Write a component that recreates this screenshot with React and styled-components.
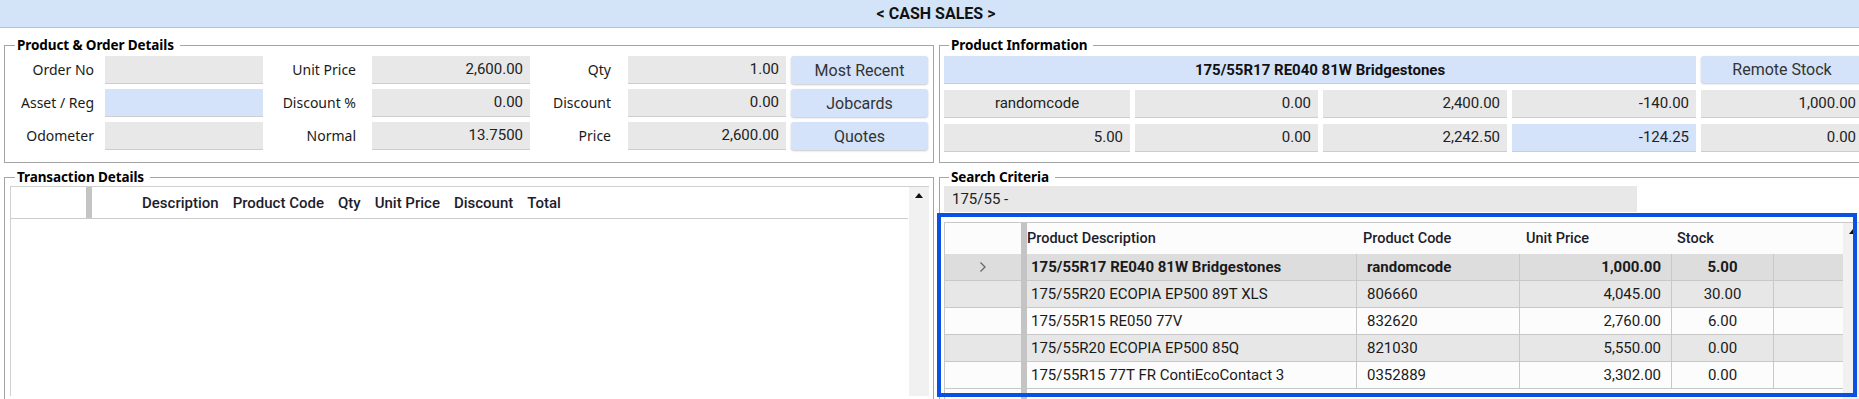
import React from 'react';
import styled, { createGlobalStyle } from 'styled-components';

const GlobalStyle = createGlobalStyle`
  html, body {
    margin: 0;
    padding: 0;
    overflow: hidden;
    background: #ffffff;
  }
  body {
    font-family: Roboto, "Liberation Sans", sans-serif;
    color: #1f1f1f;
  }
`;

const Page = styled.div`
  width: 1872px;
  height: 399px;
  overflow: hidden;
`;

const TopBar = styled.div`
  height: 27px;
  background: #d3e3f8;
  border-bottom: 1px solid #b9c3cf;
  display: flex;
  align-items: center;
  justify-content: center;
  font-family: Roboto, sans-serif;
  font-weight: 700;
  font-size: 16px;
  color: #111;
`;

const Content = styled.div`
  display: grid;
  grid-template-columns: 930px 930px;
  column-gap: 5px;
  row-gap: 6px;
  padding: 9px 0 0 4px;
`;

const GroupBox = styled.fieldset`
  margin: 0;
  min-width: 0;
  box-sizing: border-box;
  border: 1px solid #a5a5a5;
  padding: ${(p) => p.$pad || '3px 4px 9px 5px'};
  height: ${(p) => p.$height || 'auto'};
`;

const Legend = styled.legend`
  font-family: "Noto Sans", "Open Sans", sans-serif;
  font-weight: 700;
  font-size: 13.5px;
  line-height: 16px;
  letter-spacing: -0.1px;
  color: #000;
  padding: 0 6px 0 2px;
  margin-left: 5px;
`;

const OrderGrid = styled.div`
  display: grid;
  grid-template-columns: 95px 158px 109px 158px 98px 158px 142px;
  grid-auto-rows: 28px;
  row-gap: 5px;
`;

const Label = styled.div`
  font-family: "Noto Sans", "Open Sans", sans-serif;
  font-size: 14px;
  line-height: 28px;
  text-align: right;
  padding-right: ${(p) => p.$pr}px;
  color: #1a1a1a;
  white-space: nowrap;
`;

const Field = styled.div`
  box-sizing: border-box;
  height: 28px;
  background: ${(p) => (p.$blue ? '#d4e3f9' : '#e8e8e8')};
  border-bottom: 1px solid #cdcdcd;
  font-family: Roboto, sans-serif;
  font-size: 15px;
  line-height: 27px;
  padding: 0 7px;
  text-align: ${(p) => p.$align || 'right'};
  color: #222;
  white-space: nowrap;
  overflow: hidden;
`;

const SideButton = styled.button`
  margin-left: 5px;
  height: 28px;
  border: none;
  border-radius: 3px;
  background: #d4e3f9;
  box-shadow: 0 1px 2px rgba(0, 0, 0, 0.22);
  font-family: Roboto, sans-serif;
  font-size: 16px;
  color: #333;
  padding: 0;
  cursor: pointer;
`;

const InfoGrid = styled.div`
  display: grid;
  grid-template-columns: 186px 183px 184px 184px 1fr;
  grid-auto-rows: 28px;
  gap: 6px 5px;
`;

const TitleBand = styled.div`
  grid-column: span 4;
  background: #d4e3f9;
  border-bottom: 1px solid #c4cdd8;
  box-sizing: border-box;
  display: flex;
  align-items: center;
  justify-content: center;
  font-family: Roboto, sans-serif;
  font-weight: 700;
  font-size: 15px;
  color: #111;
`;

const RemoteButton = styled(SideButton)`
  margin-left: 0;
  height: 27px;
`;

const TxGrid = styled.div`
  display: flex;
  height: 209px;
  border-left: 1px solid #d0d0d0;
  border-top: 1px solid #d0d0d0;
`;

const TxMain = styled.div`
  flex: 1;
`;

const TxHeader = styled.div`
  display: flex;
  align-items: stretch;
  height: 31px;
  border-bottom: 1px solid #cbcbcb;
  margin-right: 1px;
`;

const RowHeadSpace = styled.div`
  width: ${(p) => p.$w}px;
  flex: none;
`;

const Bar = styled.div`
  width: 6px;
  flex: none;
  background: #c4c4c4;
`;

const TxHeadCell = styled.div`
  display: flex;
  align-items: center;
  padding: 0 7px;
  font-family: Roboto, sans-serif;
  font-weight: 500;
  font-size: 15px;
  color: #1d1d2b;
  white-space: nowrap;
`;

const Scrollbar = styled.div`
  width: 20px;
  flex: none;
  background: #f1f1f1;
  display: flex;
  justify-content: center;
  padding-top: 6px;
  box-sizing: border-box;
`;

const ArrowUp = styled.div`
  width: 0;
  height: 0;
  border-left: 4px solid transparent;
  border-right: 4px solid transparent;
  border-bottom: 5px solid #111;
`;

const SearchField = styled.div`
  width: 693px;
  height: 26px;
  background: #e8e8e8;
  font-family: Roboto, sans-serif;
  font-size: 15px;
  line-height: 26px;
  padding-left: 8px;
  box-sizing: border-box;
  color: #222;
`;

const ResultArea = styled.div`
  position: relative;
  margin-top: 10px;
`;

const ProductGrid = styled.div`
  display: flex;
  border-left: 1px solid #c8c8c8;
  border-top: 1px solid #c8c8c8;
  height: 180px;
`;

const Table = styled.div`
  display: grid;
  grid-template-columns: 76px 6px 330px 163px 152px 102px 69px;
  grid-template-rows: 31px;
  grid-auto-rows: 27px;
  align-content: start;
  background: #fcfcfc;
`;

const TableBar = styled.div`
  grid-column: 2;
  grid-row: 1 / span 7;
  background: #c4c4c4;
`;

const HeadCell = styled.div`
  grid-row: 1;
  grid-column: ${(p) => p.$col};
  display: flex;
  align-items: center;
  padding-left: ${(p) => p.$pl || 0}px;
  font-family: Roboto, sans-serif;
  font-weight: 500;
  font-size: 14.5px;
  color: #1d1d2b;
  white-space: nowrap;
`;

const Cell = styled.div`
  grid-row: ${(p) => p.$row};
  grid-column: ${(p) => p.$col};
  background: ${(p) => p.$bg};
  border-bottom: 1px solid #c8c8c8;
  border-right: ${(p) => (p.$noRight ? 'none' : '1px solid #c8c8c8')};
  box-sizing: border-box;
  display: flex;
  align-items: center;
  justify-content: ${(p) => p.$justify || 'flex-start'};
  padding: 0 ${(p) => p.$pr || 0}px 0 ${(p) => p.$pl || 0}px;
  font-family: Roboto, sans-serif;
  font-size: 15px;
  font-weight: ${(p) => (p.$bold ? 700 : 400)};
  color: #1a1a1a;
  white-space: nowrap;
  overflow: hidden;
`;

const Highlight = styled.div`
  position: absolute;
  top: -9px;
  left: -7px;
  width: 920px;
  height: 184px;
  box-sizing: border-box;
  border: 4px solid #0a50e2;
  pointer-events: none;
`;

const Chevron = () => (
  <svg width="8" height="12" viewBox="0 0 8 12">
    <path d="M1.5 1.5 L6 6 L1.5 10.5" fill="none" stroke="#666" strokeWidth="1.3" />
  </svg>
);

const products = [
  { desc: '175/55R17 RE040 81W Bridgestones', code: 'randomcode', price: '1,000.00', stock: '5.00', bg: '#dddddd', bold: true, current: true },
  { desc: '175/55R20 ECOPIA EP500 89T XLS', code: '806660', price: '4,045.00', stock: '30.00', bg: '#e7e7e7' },
  { desc: '175/55R15 RE050 77V', code: '832620', price: '2,760.00', stock: '6.00', bg: '#fcfcfc' },
  { desc: '175/55R20 ECOPIA EP500 85Q', code: '821030', price: '5,550.00', stock: '0.00', bg: '#e7e7e7' },
  { desc: '175/55R15 77T FR ContiEcoContact 3', code: '0352889', price: '3,302.00', stock: '0.00', bg: '#fcfcfc' },
];

const txColumns = ['Description', 'Product Code', 'Qty', 'Unit Price', 'Discount', 'Total'];

function App() {
  return (
    <Page>
      <GlobalStyle />
      <TopBar>&lt; CASH SALES &gt;</TopBar>
      <Content>
        <GroupBox $pad="3px 4px 12px 5px">
          <Legend>Product &amp; Order Details</Legend>
          <OrderGrid>
            <Label $pr={11}>Order No</Label>
            <Field />
            <Label $pr={16}>Unit Price</Label>
            <Field>2,600.00</Field>
            <Label $pr={17}>Qty</Label>
            <Field>1.00</Field>
            <SideButton>Most Recent</SideButton>

            <Label $pr={11}>Asset / Reg</Label>
            <Field $blue />
            <Label $pr={16}>Discount %</Label>
            <Field>0.00</Field>
            <Label $pr={17}>Discount</Label>
            <Field>0.00</Field>
            <SideButton>Jobcards</SideButton>

            <Label $pr={11}>Odometer</Label>
            <Field />
            <Label $pr={16}>Normal</Label>
            <Field>13.7500</Field>
            <Label $pr={17}>Price</Label>
            <Field>2,600.00</Field>
            <SideButton>Quotes</SideButton>
          </OrderGrid>
        </GroupBox>

        <GroupBox $pad="3px 5px 9px 4px">
          <Legend>Product Information</Legend>
          <InfoGrid>
            <TitleBand>175/55R17 RE040 81W Bridgestones</TitleBand>
            <RemoteButton>Remote Stock</RemoteButton>

            <Field $align="center">randomcode</Field>
            <Field>0.00</Field>
            <Field>2,400.00</Field>
            <Field>-140.00</Field>
            <Field>1,000.00</Field>

            <Field>5.00</Field>
            <Field>0.00</Field>
            <Field>2,242.50</Field>
            <Field $blue>-124.25</Field>
            <Field>0.00</Field>
          </InfoGrid>
        </GroupBox>

        <GroupBox $pad="1px 4px 4px 5px" $height="240px">
          <Legend>Transaction Details</Legend>
          <TxGrid>
            <TxMain>
              <TxHeader>
                <RowHeadSpace $w={75} />
                <Bar />
                <RowHeadSpace $w={43} />
                {txColumns.map((c) => (
                  <TxHeadCell key={c}>{c}</TxHeadCell>
                ))}
              </TxHeader>
            </TxMain>
            <Scrollbar>
              <ArrowUp />
            </Scrollbar>
          </TxGrid>
        </GroupBox>

        <GroupBox $pad="1px 5px 4px 4px" $height="240px">
          <Legend>Search Criteria</Legend>
          <SearchField>175/55 -</SearchField>
          <ResultArea>
            <ProductGrid>
              <Table>
                <TableBar />
                <HeadCell $col={3} $pl={0}>Product Description</HeadCell>
                <HeadCell $col={4} $pl={6}>Product Code</HeadCell>
                <HeadCell $col={5} $pl={6}>Unit Price</HeadCell>
                <HeadCell $col={6} $pl={5}>Stock</HeadCell>
                {products.map((p, i) => {
                  const row = i + 2;
                  return (
                    <React.Fragment key={p.code}>
                      <Cell $row={row} $col={1} $bg={p.bg} $noRight $justify="center">
                        {p.current && <Chevron />}
                      </Cell>
                      <Cell $row={row} $col={3} $bg={p.bg} $pl={4} $bold={p.bold}>{p.desc}</Cell>
                      <Cell $row={row} $col={4} $bg={p.bg} $pl={10} $bold={p.bold}>{p.code}</Cell>
                      <Cell $row={row} $col={5} $bg={p.bg} $pr={10} $justify="flex-end" $bold={p.bold}>{p.price}</Cell>
                      <Cell $row={row} $col={6} $bg={p.bg} $justify="center" $bold={p.bold}>{p.stock}</Cell>
                      <Cell $row={row} $col={7} $bg={p.bg} $noRight />
                    </React.Fragment>
                  );
                })}
              </Table>
              <Scrollbar>
                <ArrowUp />
              </Scrollbar>
            </ProductGrid>
            <Highlight />
          </ResultArea>
        </GroupBox>
      </Content>
    </Page>
  );
}

export default App;
